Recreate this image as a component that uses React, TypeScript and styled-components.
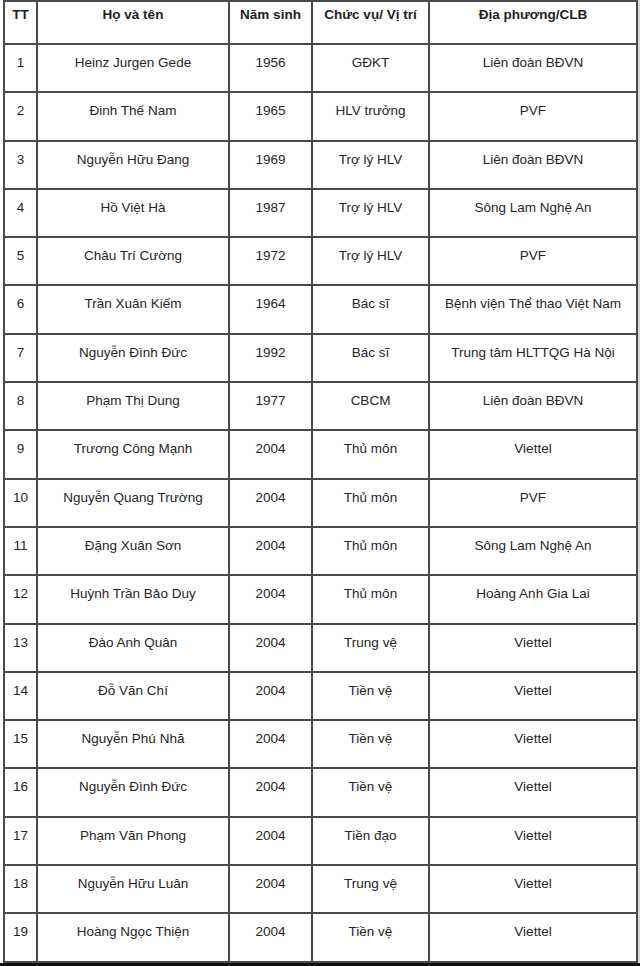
import React from "react";
import styled, { createGlobalStyle } from "styled-components";

interface Member {
  name: string;
  year: string;
  role: string;
  club: string;
}

const members: Member[] = [
  { name: "Heinz Jurgen Gede", year: "1956", role: "GĐKT", club: "Liên đoàn BĐVN" },
  { name: "Đinh Thế Nam", year: "1965", role: "HLV trưởng", club: "PVF" },
  { name: "Nguyễn Hữu Đang", year: "1969", role: "Trợ lý HLV", club: "Liên đoàn BĐVN" },
  { name: "Hồ Việt Hà", year: "1987", role: "Trợ lý HLV", club: "Sông Lam Nghệ An" },
  { name: "Châu Trí Cường", year: "1972", role: "Trợ lý HLV", club: "PVF" },
  { name: "Trần Xuân Kiếm", year: "1964", role: "Bác sĩ", club: "Bệnh viện Thể thao Việt Nam" },
  { name: "Nguyễn Đình Đức", year: "1992", role: "Bác sĩ", club: "Trung tâm HLTTQG Hà Nội" },
  { name: "Phạm Thị Dung", year: "1977", role: "CBCM", club: "Liên đoàn BĐVN" },
  { name: "Trương Công Mạnh", year: "2004", role: "Thủ môn", club: "Viettel" },
  { name: "Nguyễn Quang Trường", year: "2004", role: "Thủ môn", club: "PVF" },
  { name: "Đặng Xuân Sơn", year: "2004", role: "Thủ môn", club: "Sông Lam Nghệ An" },
  { name: "Huỳnh Trần Bảo Duy", year: "2004", role: "Thủ môn", club: "Hoàng Anh Gia Lai" },
  { name: "Đào Anh Quân", year: "2004", role: "Trung vệ", club: "Viettel" },
  { name: "Đỗ Văn Chí", year: "2004", role: "Tiền vệ", club: "Viettel" },
  { name: "Nguyễn Phú Nhã", year: "2004", role: "Tiền vệ", club: "Viettel" },
  { name: "Nguyễn Đình Đức", year: "2004", role: "Tiền vệ", club: "Viettel" },
  { name: "Phạm Văn Phong", year: "2004", role: "Tiền đạo", club: "Viettel" },
  { name: "Nguyễn Hữu Luân", year: "2004", role: "Trung vệ", club: "Viettel" },
  { name: "Hoàng Ngọc Thiện", year: "2004", role: "Tiền vệ", club: "Viettel" },
];

const GlobalStyle = createGlobalStyle`
  html, body {
    margin: 0;
    padding: 0;
    background: #ffffff;
  }
  body {
    font-family: "Liberation Sans", Arial, sans-serif;
    color: #222;
  }
`;

const Page = styled.div`
  width: 640px;
  height: 966px;
  display: flex;
  flex-direction: column;
  background: linear-gradient(to right, #fff 636px, #d8d8d8 636px);
  overflow: hidden;
`;

const Wrap = styled.div`
  padding-left: 3px;
  flex: 1;
`;

const Footer = styled.div`
  height: 4px;
  background: #111;
`;

const Table = styled.table`
  width: 633px;
  border-collapse: collapse;
  table-layout: fixed;
  background: #fff;
`;

const Col = styled.col<{ $w: number }>`
  width: ${p => p.$w}px;
`;

const HeadRow = styled.tr`
  height: 43px;
`;

const Row = styled.tr`
  height: 48.3px;
`;

const Th = styled.th`
  border: 2px solid #4a4a4a;
  font-size: 13.5px;
  font-weight: bold;
  line-height: 16px;
  text-align: center;
  vertical-align: top;
  padding: 5px 2px 0;
  color: #1e1e1e;
  white-space: nowrap;
`;

const Td = styled.td`
  border: 2px solid #4a4a4a;
  font-size: 13.5px;
  line-height: 16px;
  text-align: center;
  vertical-align: top;
  padding: 10px 2px 0;
  color: #262626;
  white-space: nowrap;
`;

const App = () => {
  return (
    <>
      <GlobalStyle />
      <Page>
        <Wrap>
          <Table>
            <colgroup>
              <Col $w={33} />
              <Col $w={192} />
              <Col $w={83} />
              <Col $w={117} />
              <Col $w={208} />
            </colgroup>
            <thead>
              <HeadRow>
                <Th>TT</Th>
                <Th>Họ và tên</Th>
                <Th>Năm sinh</Th>
                <Th>Chức vụ/ Vị trí</Th>
                <Th>Địa phương/CLB</Th>
              </HeadRow>
            </thead>
            <tbody>
              {members.map((m, i) => (
                <Row key={i}>
                  <Td>{i + 1}</Td>
                  <Td>{m.name}</Td>
                  <Td>{m.year}</Td>
                  <Td>{m.role}</Td>
                  <Td>{m.club}</Td>
                </Row>
              ))}
            </tbody>
          </Table>
        </Wrap>
        <Footer />
      </Page>
    </>
  );
};

export default App;
